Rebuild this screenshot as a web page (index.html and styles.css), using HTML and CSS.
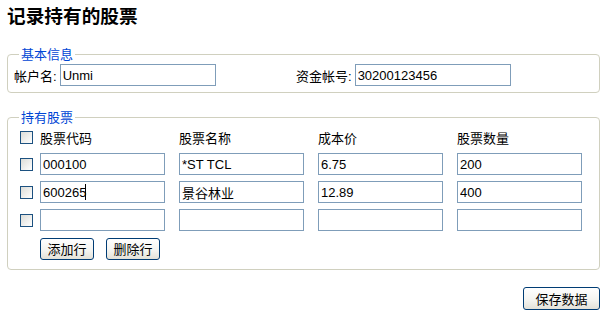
FILE: index.html
```html
<!DOCTYPE html>
<html lang="zh-CN">
<head>
    <meta charset="UTF-8">
    <title>记录持有的股票</title>
    <link rel="stylesheet" href="styles.css">
</head>
<body>
    <h1 class="title">记录持有的股票</h1>
    <fieldset class="box box-basic">
        <legend>基本信息</legend>
        <div class="basic-row">
            <label class="field field-account"><span class="lbl">帐户名:</span><input type="text" class="txt" value="Unmi"></label>
            <label class="field"><span class="lbl">资金帐号:</span><input type="text" class="txt" value="30200123456"></label>
        </div>
    </fieldset>
    <fieldset class="box box-stocks">
        <legend>持有股票</legend>
        <div class="stock-grid">
            <input type="checkbox" class="check">
            <span class="col-head">股票代码</span>
            <span class="col-head">股票名称</span>
            <span class="col-head">成本价</span>
            <span class="col-head">股票数量</span>

            <input type="checkbox" class="check">
            <input type="text" class="txt" value="000100">
            <input type="text" class="txt" value="*ST TCL">
            <input type="text" class="txt" value="6.75">
            <input type="text" class="txt" value="200">

            <input type="checkbox" class="check">
            <span class="caret-wrap"><input type="text" class="txt" value="600265"></span>
            <input type="text" class="txt" value="景谷林业">
            <input type="text" class="txt" value="12.89">
            <input type="text" class="txt" value="400">

            <input type="checkbox" class="check">
            <input type="text" class="txt" value="">
            <input type="text" class="txt" value="">
            <input type="text" class="txt" value="">
            <input type="text" class="txt" value="">

            <div class="row-actions">
                <button class="btn btn-row">添加行</button>
                <button class="btn btn-row">删除行</button>
            </div>
        </div>
    </fieldset>
    <div class="footer">
        <button class="btn btn-save">保存数据</button>
    </div>
</body>
</html>
```

FILE: styles.css
```css
body {
    margin: 0;
    padding: 6px 7px 0;
    background: #fff;
    color: #000;
    font: 13px "Liberation Sans", "Noto Sans CJK SC", sans-serif;
}
.title {
    margin: 0 0 19px;
    font-size: 18.67px;
    font-weight: bold;
    line-height: 22px;
}
.box {
    margin: 0;
    padding: 2px 6px 6px;
    min-width: 0;
    border: 1px solid #d0d0bf;
    border-radius: 4px;
}
.box legend {
    margin-left: 5px;
    padding: 0 2px;
    color: #0046d5;
    line-height: 15px;
}
.box-stocks {
    margin-top: 17px;
    padding: 3px 6px 10px;
}
.txt {
    box-sizing: border-box;
    height: 22px;
    margin: 0;
    padding: 0 2px;
    border: 1px solid #7f9db9;
    background: #fff;
    font: inherit;
    color: #000;
    outline: none;
}
.basic-row {
    display: flex;
    align-items: center;
}
.field {
    display: flex;
    align-items: center;
}
.field-account {
    width: 282px;
}
.field .txt {
    width: 156px;
    margin-left: 3px;
}
.stock-grid {
    display: grid;
    grid-template-columns: 20px repeat(3, 139px) 125px;
    grid-template-rows: 19px repeat(3, 22px) 22px;
    row-gap: 6px;
    align-items: center;
    margin-left: 6px;
}
.stock-grid .txt {
    width: 125px;
}
.check {
    appearance: none;
    width: 13px;
    height: 13px;
    margin: 0;
    border: 1px solid #1c5180;
    background: linear-gradient(135deg, #dcdcd7, #fff);
}
.caret-wrap {
    position: relative;
    display: block;
    width: 125px;
    height: 22px;
}
.caret-wrap::after {
    content: "";
    position: absolute;
    left: 45px;
    top: 3px;
    width: 1px;
    height: 16px;
    background: #000;
}
.row-actions {
    grid-column: 2 / 6;
    display: flex;
    gap: 12px;
    margin-top: 1px;
}
.btn {
    box-sizing: border-box;
    height: 22px;
    padding: 0;
    border: 1px solid #003c74;
    border-radius: 3px;
    background: linear-gradient(#fff, #f3f3ef 60%, #e3e1d8);
    font: inherit;
    color: #000;
}
.btn-row {
    width: 54px;
}
.footer {
    display: flex;
    justify-content: flex-end;
    margin-top: 17px;
}
.btn-save {
    width: 77px;
    height: 23px;
}
```
